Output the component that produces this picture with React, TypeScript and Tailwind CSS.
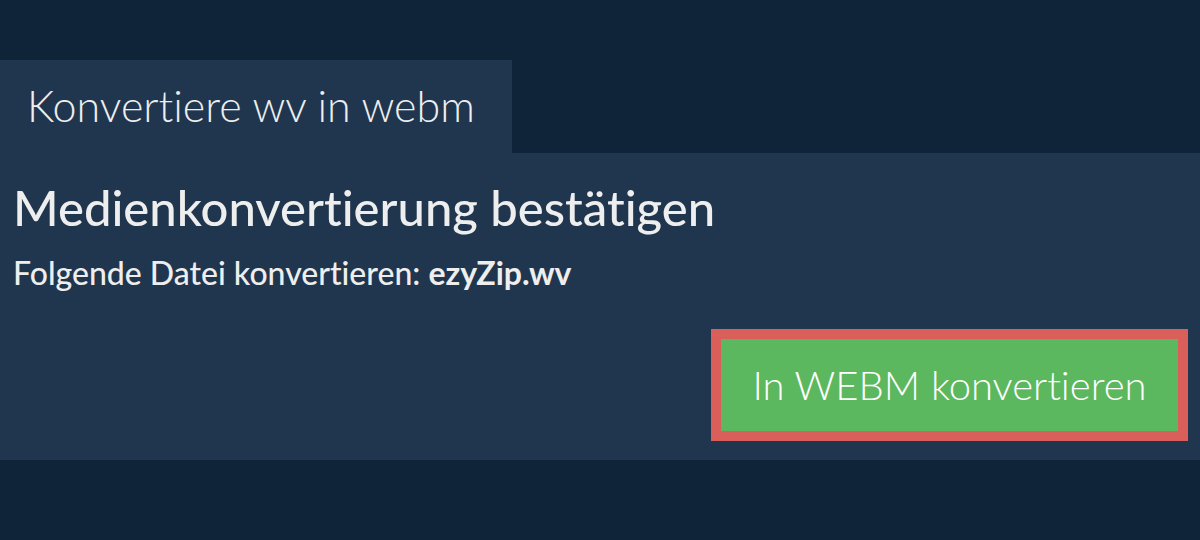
export default function App() {
  return (
    <div className="min-h-[540px] w-full bg-[#0f2339] pt-[60px] font-['Lato','Liberation_Sans',sans-serif] text-[#eeeeee] [font-variant-ligatures:none]">
      <div className="flex">
        <div className="flex h-[93px] w-[512px] items-center bg-[#20364f] pl-[27px] text-[43px] font-light">
          Konvertiere wv in webm
        </div>
      </div>
      <section className="flex flex-col bg-[#20364f] px-[13px] pb-[19px] pt-[24px]">
        <h1 className="text-[49px] font-medium leading-[60px]">Medienkonvertierung bestätigen</h1>
        <p className="mt-[16px] text-[32px] font-medium leading-[40px]">
          Folgende Datei konvertieren: <b className="font-bold">ezyZip.wv</b>
        </p>
        <div className="mt-[36px] flex justify-end">
          <button className="-mr-[1px] h-[112px] w-[477px] border-[10px] border-[#da5f5b] bg-[#5cb85e] text-[40px] font-light text-white">
            In WEBM konvertieren
          </button>
        </div>
      </section>
    </div>
  )
}
